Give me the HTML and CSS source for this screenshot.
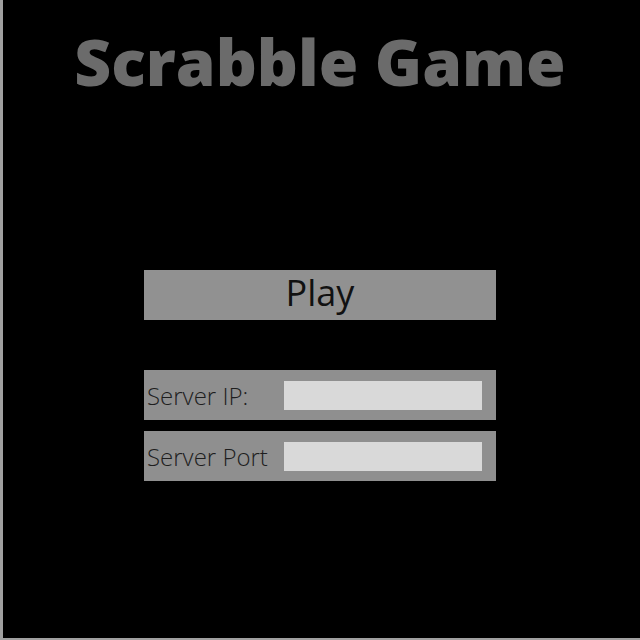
FILE: index.html
```html
<!DOCTYPE html>
<html>
<head>
<meta charset="utf-8">
<link rel="stylesheet" href="styles.css">
</head>
<body>
<div class="screen">
  <h1 class="title">Scrabble Game</h1>
  <div class="play">Play</div>
  <div class="field first">
    <span class="label">Server IP:</span>
    <input class="input" type="text">
  </div>
  <div class="field">
    <span class="label">Server Port</span>
    <input class="input" type="text">
  </div>
</div>
</body>
</html>
```
FILE: styles.css
```css
html, body {
  margin: 0;
  padding: 0;
  background: #000;
}
.screen {
  width: 640px;
  height: 640px;
  box-sizing: border-box;
  background: #000;
  box-shadow: inset 3px -2px 0 #a0a0a0;
  display: flex;
  flex-direction: column;
  align-items: center;
  font-family: "Open Sans", "DejaVu Sans", sans-serif;
}
.title {
  margin: 22px 0 0 0;
  font-size: 64px;
  line-height: 80px;
  font-weight: 800;
  color: #6b6b6b;
}
.play {
  margin-top: 168px;
  width: 352px;
  height: 50px;
  box-sizing: border-box;
  background: #919191;
  color: #111;
  font-size: 36px;
  line-height: 42px;
  padding-top: 2px;
  text-align: center;
}
.field {
  width: 352px;
  height: 50px;
  box-sizing: border-box;
  background: #8f8f8f;
  display: flex;
  align-items: flex-start;
  padding-left: 3px;
  margin-top: 11px;
}
.field.first {
  margin-top: 50px;
}
.label {
  flex: 0 0 137px;
  font-size: 24px;
  font-weight: 300;
  line-height: 50px;
  padding-top: 1px;
  color: #1e1e1e;
  white-space: nowrap;
}
.input {
  margin: 11px 0 0 0;
  width: 198px;
  height: 29px;
  box-sizing: border-box;
  border: none;
  background: #d9d9d9;
  padding: 0;
}
```
